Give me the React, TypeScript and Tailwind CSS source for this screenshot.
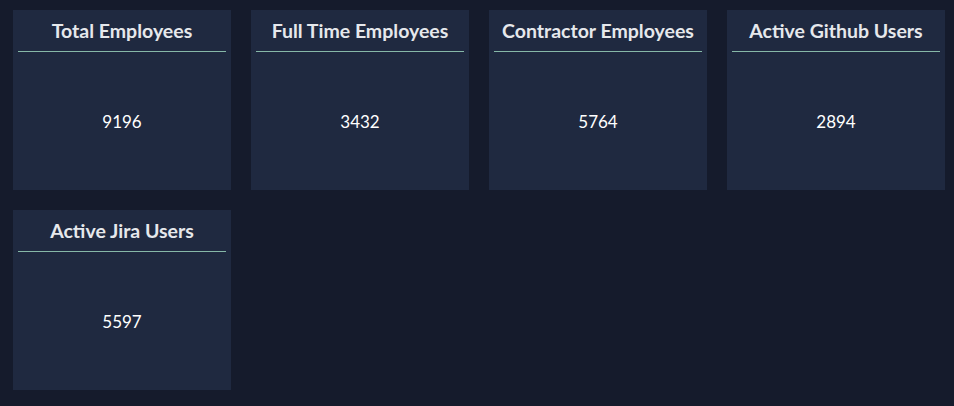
import React from 'react';

const STATS = [
  { label: 'Total Employees', value: 9196 },
  { label: 'Full Time Employees', value: 3432 },
  { label: 'Contractor Employees', value: 5764 },
  { label: 'Active Github Users', value: 2894 },
  { label: 'Active Jira Users', value: 5597 },
];

const StatCard: React.FC<{ label: string; value: number }> = ({ label, value }) => (
  <div className="h-[180px] bg-[#1f2940] flex flex-col">
    <div className="pt-[9px] pb-[8px] text-center text-[19.5px] leading-[24px] font-bold text-[#e6e8ec] whitespace-nowrap">
      {label}
    </div>
    <div className="mx-[5px] h-px bg-[#86b8a8]" />
    <div className="flex-1 flex items-center justify-center pt-[2px] text-[17px] text-white">
      {value}
    </div>
  </div>
);

export default function App() {
  return (
    <div
      className="min-h-[406px] w-full bg-[#151b2c] pl-[13px] pt-[10px]"
      style={{ fontFamily: '"Source Sans Pro", Lato, "Noto Sans", sans-serif' }}
    >
      <div className="grid grid-cols-[repeat(4,218px)] gap-[20px]">
        {STATS.map((s) => (
          <StatCard key={s.label} label={s.label} value={s.value} />
        ))}
      </div>
    </div>
  );
}
